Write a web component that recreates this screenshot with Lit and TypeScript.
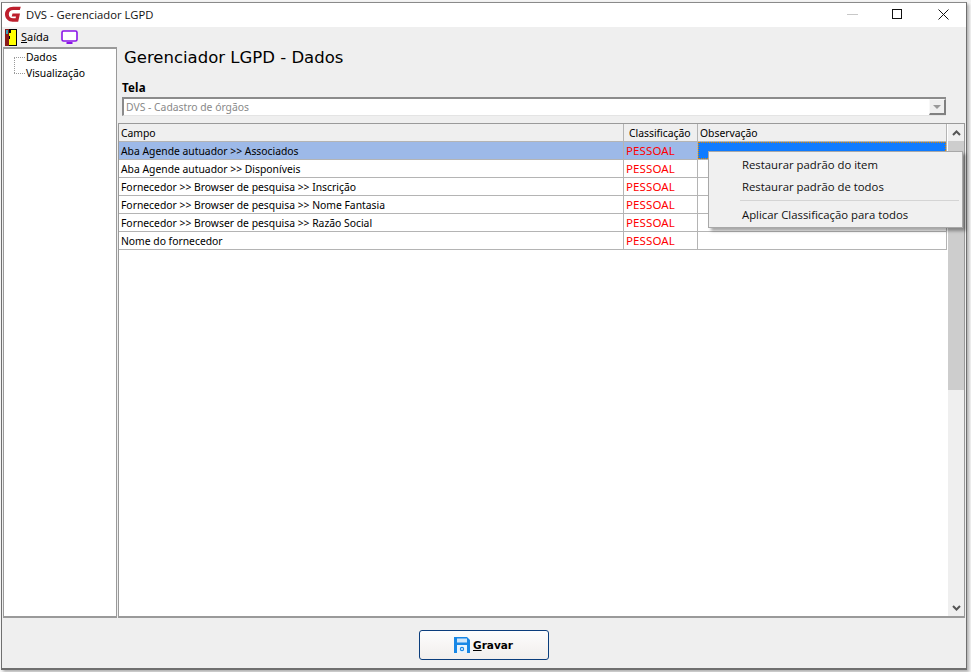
import { LitElement, html, css, svg } from "lit";
import { customElement } from "lit/decorators.js";

const ROWS = [
  "Aba Agende autuador >> Associados",
  "Aba Agende autuador >> Disponíveis",
  "Fornecedor >> Browser de pesquisa >> Inscrição",
  "Fornecedor >> Browser de pesquisa >> Nome Fantasia",
  "Fornecedor >> Browser de pesquisa >> Razão Social",
  "Nome do fornecedor",
];

const logo = svg`<svg width="16" height="16" viewBox="0 0 16 16"><path d="M15.800 .8H8.200C3.600 .8 0 3.900 0 8.300 0 12.600 3.300 15.800 7.700 15.800H13.200L15 7.600H7.500L6.700 10.400H11L10.600 12.300H8.100C5.500 12.300 3.800 10.600 3.800 8.200 3.800 5.700 5.800 4.100 8.300 4.100H14.800Z" fill="#bd1f2d"/></svg>`;
const exit = svg`<svg width="12" height="17" viewBox="0 0 12 17"><rect width="12" height="17" fill="#000"/><rect x="4" y="1" width="7" height="15" fill="#ffff00"/><rect x="0" y="0" width="4" height="17" fill="#8a1a1a"/><rect x="1" y="1" width="2" height="4" fill="#35a0b8"/><rect x="4" y="1" width="2" height="3" fill="#000"/><rect x="4" y="7" width="1" height="3" fill="#000"/></svg>`;
const monitor = svg`<svg width="17" height="15" viewBox="0 0 17 15"><rect x="1" y="1" width="15" height="10" rx="1.500" fill="#fff" stroke="#8a14e8" stroke-width="1.600"/><rect x="5.500" y="12" width="6" height="2" fill="#8a14e8"/></svg>`;
const disk = svg`<svg width="16" height="16" viewBox="0 0 16 16"><path d="M0 0H13L16 3V16H0Z" fill="#1787e6"/><rect x="3" y="1.500" width="10" height="4" fill="#cfe6fa"/><rect x="3" y="8" width="10" height="8" fill="#e8f3fc"/><circle cx="8" cy="12" r="2.200" fill="#1787e6"/><circle cx="8" cy="12" r="1" fill="#e8f3fc"/></svg>`;
const chevUp = svg`<svg width="9" height="6" viewBox="0 0 9 6"><path d="M1 5L4.500 1.500 8 5" fill="none" stroke="#555" stroke-width="2"/></svg>`;
const chevDown = svg`<svg width="9" height="6" viewBox="0 0 9 6"><path d="M1 1L4.500 4.500 8 1" fill="none" stroke="#555" stroke-width="2"/></svg>`;

@customElement("app-root")
export class AppRoot extends LitElement {
  static styles = css`
    :host {
      display: block;
      width: 971px;
      height: 672px;
      background: #f8f8f8;
      font-family: "Noto Sans", "Open Sans", sans-serif;
      font-size: 10.350px;
      color: #000;
      overflow: hidden;
    }
    * { box-sizing: border-box; }
    .strip { height: 2px; background: #f4f4f4; }
    .window {
      width: 966px;
      height: 668px;
      margin-left: 1px;
      border: 1px solid #6f6f6f;
      border-top-color: #8a8a8a;
      border-width: 1px 1px 2px 1px;
      box-shadow: 2px 2px 3px rgba(0,0,0,.3);
      background: #efefef;
      display: flex;
      flex-direction: column;
      position: relative;
    }
    .title {
      height: 24px;
      padding-bottom: 2px;
      background: #fff;
      display: flex;
      align-items: center;
      padding-left: 3px;
      gap: 5px;
      font-family: "Open Sans", sans-serif;
      font-size: 11.250px;
      flex: none;
    }
    .title-text { flex: 1; color: #111; }
    .win-btns { display: flex; }
    .win-btn { width: 45.500px; height: 22px; display: flex; align-items: center; justify-content: center; }
    .toolbar {
      height: 20px;
      display: flex;
      align-items: center;
      padding-left: 3px;
      flex: none;
    }
    .tool-exit { display: flex; align-items: center; gap: 4px; font-size: 11px; line-height: 13px; }
    .tool-exit span { margin-top: -2px; }
    .tool-exit u { text-decoration: underline; }
    .tool-mon { margin-left: 12px; display: flex; }
    .main {
      flex: 1;
      display: flex;
      padding-left: 1px;
      padding-right: 1px;
      gap: 1px;
      min-height: 0;
    }
    .tree {
      width: 114px;
      background: #fff;
      border: 1px solid #9a9a9a;
      border-width: 2px 1px 2px 1px;
      flex: none;
    }
    .tree-item { height: 16px; display: flex; align-items: center; position: relative; padding-left: 22px; }
    .tree-line { position: absolute; left: 10px; top: 8px; width: 11px; border-top: 1px dotted #999; }
    .tree-vert { position: absolute; left: 10px; top: -8px; height: 16px; border-left: 1px dotted #999; }
    .content { flex: 1; min-width: 0; display: flex; flex-direction: column; }
    .heading {
      font-family: "DejaVu Sans", sans-serif;
      font-size: 16.500px;
      height: 20px;
      padding-left: 6px;
      display: flex;
      align-items: center;
      flex: none;
    }
    .label { font-weight: 700; font-size: 11.500px; padding-left: 4px; height: 16px; display: flex; align-items: center; margin-top: 12px; flex: none; letter-spacing: .2px; }
    .combo {
      margin-left: 4px;
      margin-top: 2px;
      width: 824px;
      height: 19px;
      background: #fff;
      border: 2px solid #8b8b8b;
      border-width: 2px 0 1px 2px;
      border-bottom-color: #e4e4e4;
      display: flex;
      align-items: center;
      color: #8a8a8a;
      padding-left: 2px;
      justify-content: space-between;
      flex: none;
    }
    .combo-btn {
      width: 17px;
      height: 16px;
      background: #efefef;
      border: 1px solid #f8f8f8;
      border-right: 2px solid #808080;
      border-bottom: 2px solid #808080;
      display: flex;
      align-items: center;
      justify-content: center;
    }
    .combo-btn i { width: 0; height: 0; border: 4px solid transparent; border-top: 4px solid #999; border-bottom: 0; }
    .grid-box {
      margin-top: 7px;
      flex: 1;
      min-height: 0;
      background: #fff;
      border: 1px solid #9a9a9a;
      border-width: 1px 1px 2px 1px;
      display: flex;
      position: relative;
    }
    .grid { flex: 1; min-width: 0; }
    .row {
      display: grid;
      grid-template-columns: 505px 74px 248px;
      height: 18px;
      width: 828px;
      border-bottom: 1px solid #b4b4b4;
      border-right: 1px solid #b4b4b4;
    }
    .row.head { background: #efefef; }
    .cell { display: flex; align-items: center; padding-left: 2px; border-right: 1px solid #b4b4b4; white-space: nowrap; overflow: hidden; }
    .cell:last-child { border-right: 0; }
    .row.sel .cell:first-child, .row.sel .cell:nth-child(2) { background: #9db9e8; }
    .cell.pess { color: #f00; font-size: 11.500px; letter-spacing: .1px; padding-left: 2px; }
    .row.head .cell:nth-child(2) { padding-left: 5px; }
    .obs-sel { background: #0f7bff; outline: 1px dotted #e08a00; outline-offset: -1px; }
    .scroll {
      width: 16px;
      background: #efefef;
      flex: none;
      display: flex;
      flex-direction: column;
      align-items: center;
    }
    .sc-btn { height: 17px; width: 100%; display: flex; align-items: center; justify-content: center; flex: none; }
    .thumb { height: 249px; width: 100%; background: #cdcdcd; flex: none; }
    .sc-fill { flex: 1; }
    .footer { height: 50px; flex: none; display: flex; align-items: center; justify-content: center; }
    .save {
      width: 130px;
      height: 30px;
      border: 1px solid #0a3d7c;
      border-radius: 3px;
      background: linear-gradient(#fdfdfd, #f1eeec);
      display: flex;
      align-items: center;
      justify-content: center;
      gap: 3px;
      font-family: "DejaVu Sans", sans-serif;
      font-size: 10.500px;
      font-weight: 700;
      margin-left: -1px;
      margin-top: 4px;
    }
    .menu {
      position: absolute;
      left: 706px;
      top: 148px;
      width: 255px;
      height: 77px;
      background: #f0f0f0;
      border: 1px solid #a8a8a8;
      box-shadow: 3px 3px 3px rgba(0,0,0,.35);
      padding: 1px 2px 0;
      font-family: "Open Sans", sans-serif;
      font-size: 11.350px;
      color: #111;
    }
    .mi { height: 22px; display: flex; align-items: center; padding-left: 31px; }
    .sep { height: 1px; background: #d4d4d4; margin: 3px 1px 2px 29px; }
  `;

  render() {
    return html`
      <div class="strip"></div>
      <div class="window">
        <div class="title">
          ${logo}
          <span class="title-text">DVS - Gerenciador LGPD</span>
          <span class="win-btns">
            <span class="win-btn"><svg width="11" height="11" viewBox="0 0 11 11"><path d="M0 5.500H11" stroke="#c8c8c8"/></svg></span>
            <span class="win-btn"><svg width="11" height="11" viewBox="0 0 11 11"><rect x=".5" y=".5" width="9" height="9" fill="none" stroke="#111"/></svg></span>
            <span class="win-btn"><svg width="11" height="11" viewBox="0 0 11 11"><path d="M.5 .5L10.500 10.500M10.500 .5L.5 10.500" stroke="#111"/></svg></span>
          </span>
        </div>
        <div class="toolbar">
          <span class="tool-exit">${exit}<span><u>S</u>aída</span></span>
          <span class="tool-mon">${monitor}</span>
        </div>
        <div class="main">
          <div class="tree">
            <div class="tree-item"><span class="tree-line"></span>Dados</div>
            <div class="tree-item"><span class="tree-vert"></span><span class="tree-line"></span>Visualização</div>
          </div>
          <div class="content">
            <div class="heading">Gerenciador LGPD - Dados</div>
            <div class="label">Tela</div>
            <div class="combo">DVS - Cadastro de órgãos<span class="combo-btn"><i></i></span></div>
            <div class="grid-box">
              <div class="grid">
                <div class="row head">
                  <div class="cell">Campo</div><div class="cell">Classificação</div><div class="cell">Observação</div>
                </div>
                ${ROWS.map(
                  (r, i) => html`<div class="row ${i === 0 ? "sel" : ""}">
                    <div class="cell">${r}</div>
                    <div class="cell pess">PESSOAL</div>
                    <div class="cell ${i === 0 ? "obs-sel" : ""}"></div>
                  </div>`
                )}
              </div>
              <div class="scroll">
                <div class="sc-btn">${chevUp}</div>
                <div class="thumb"></div>
                <div class="sc-fill"></div>
                <div class="sc-btn">${chevDown}</div>
              </div>
            </div>
          </div>
        </div>
        <div class="footer">
          <div class="save">${disk}<span><u>G</u>ravar</span></div>
        </div>
        <div class="menu">
          <div class="mi">Restaurar padrão do item</div>
          <div class="mi">Restaurar padrão de todos</div>
          <div class="sep"></div>
          <div class="mi">Aplicar Classificação para todos</div>
        </div>
      </div>
    `;
  }
}
